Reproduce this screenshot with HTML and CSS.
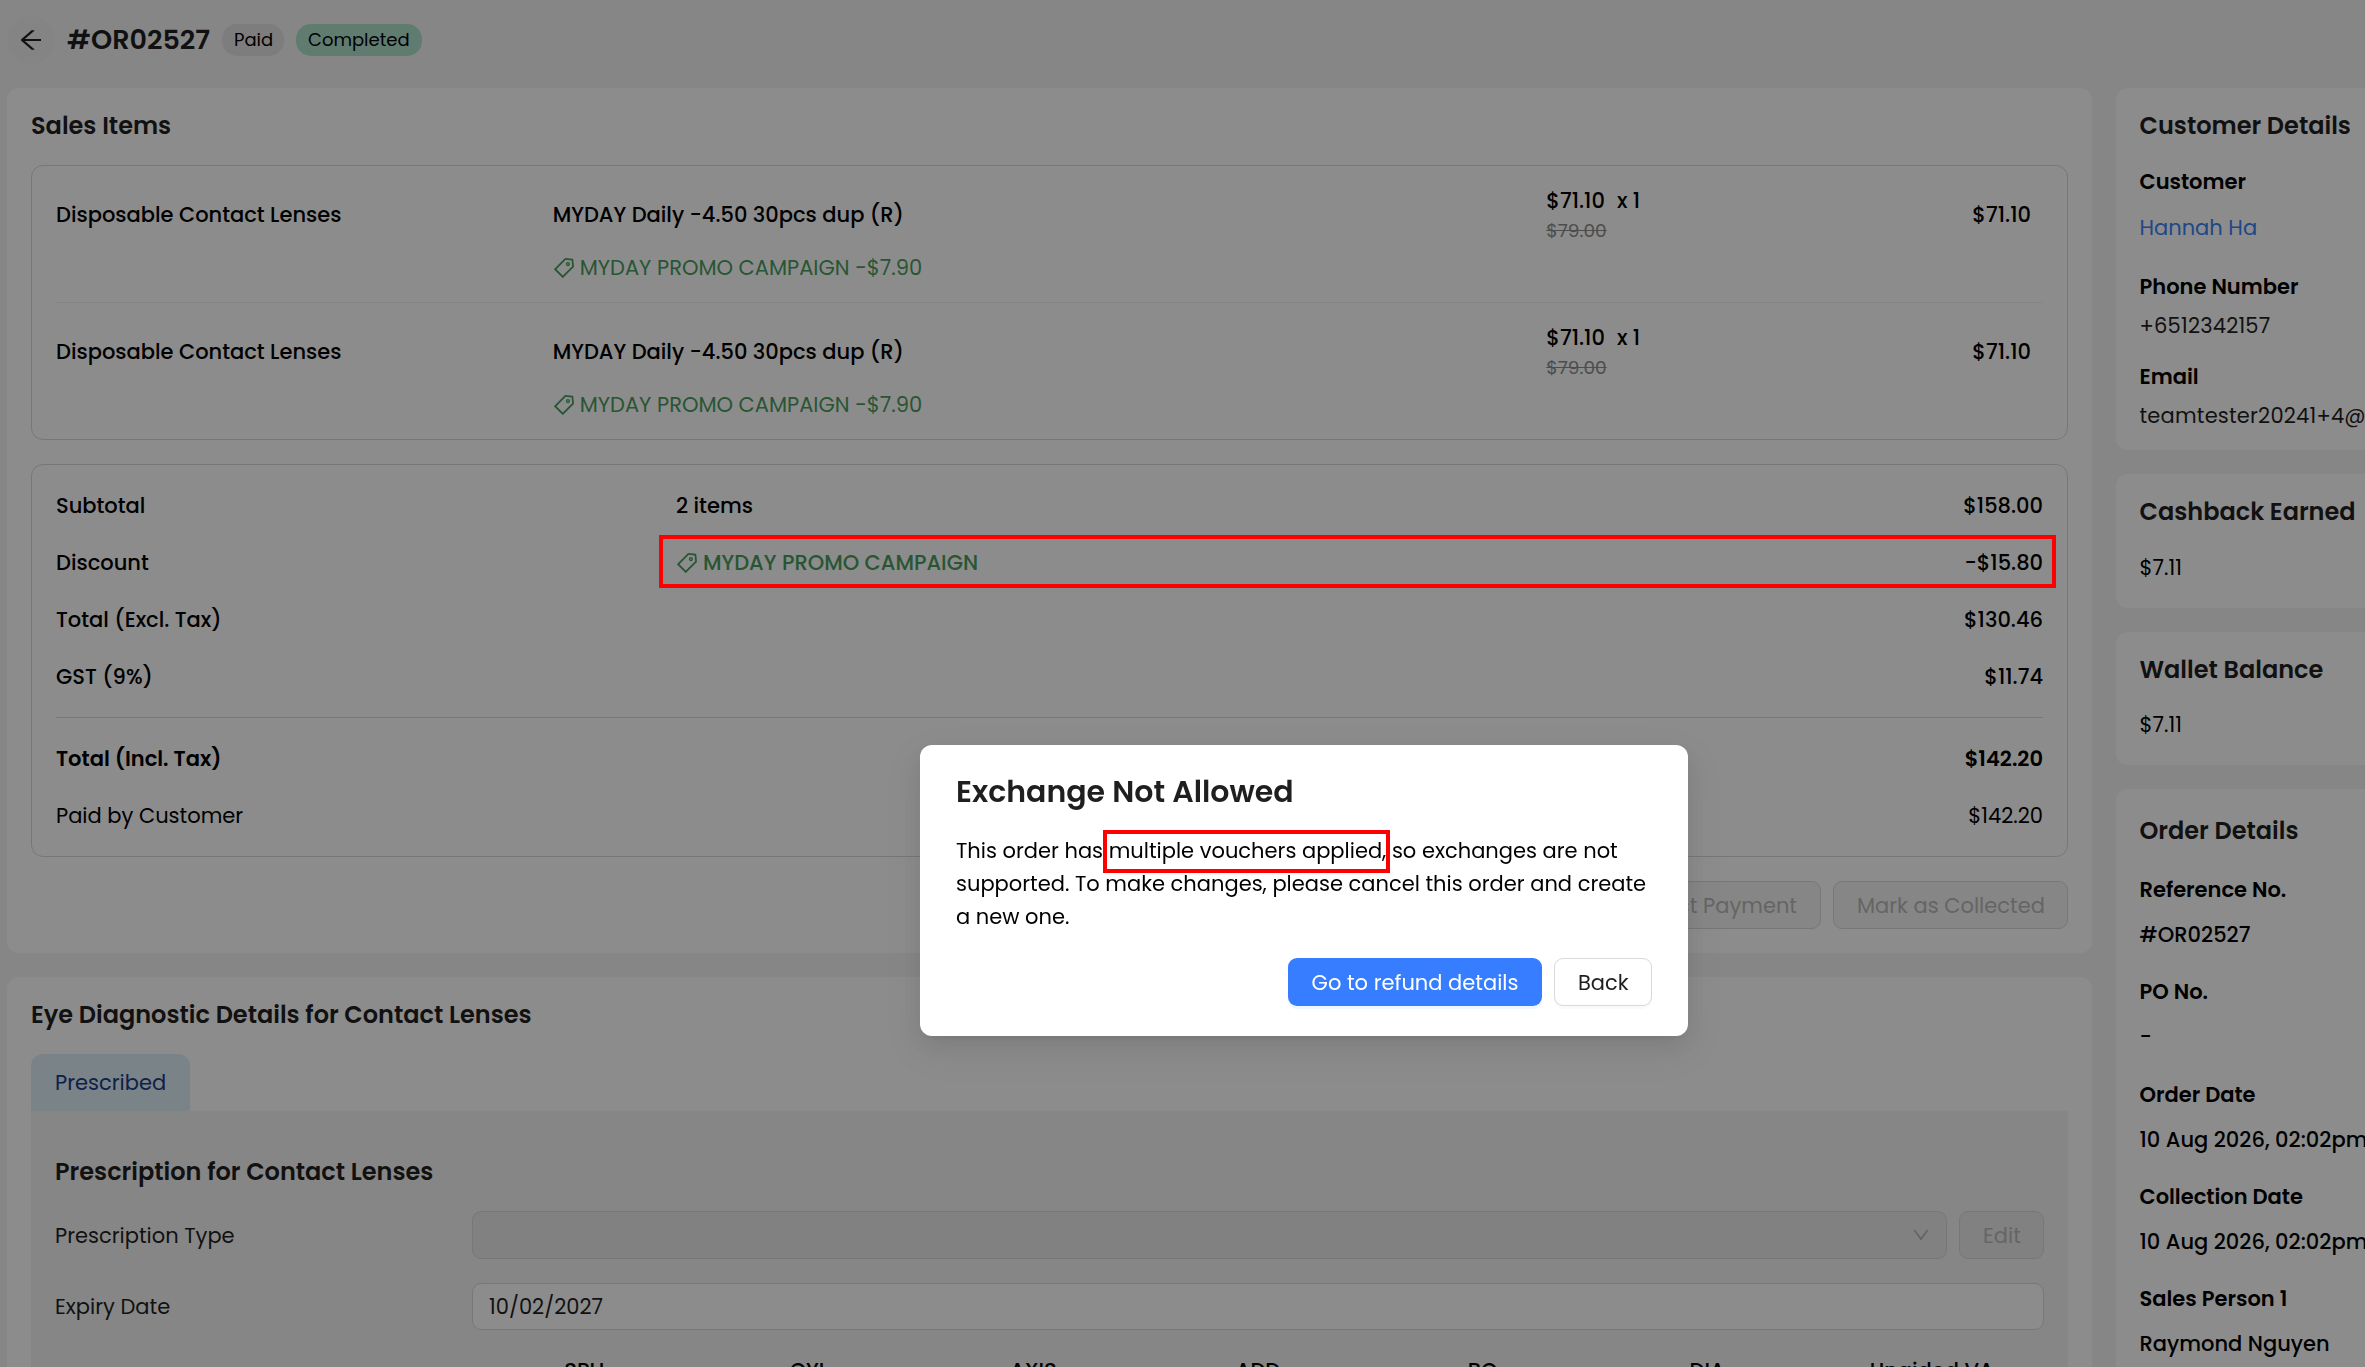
FILE: index.html
```html
<!DOCTYPE html>
<html lang="en">
<head>
    <meta charset="UTF-8">
    <meta name="viewport" content="width=device-width, initial-scale=1.0">
    <title>Order #OR02527</title>
    <link rel="stylesheet" href="styles.css">
</head>
<body>
    <svg class="sprite">
        <symbol id="icon-tag" viewBox="0 0 1024 1024">
            <path d="M938 458.8l-29.6-312.6c-1.5-16.2-14.4-29-30.6-30.6L565.2 86h-.4c-3.2 0-5.7 1-7.6 2.9L88.9 557.2a9.96 9.96 0 000 14.1l363.8 363.8c1.9 1.9 4.4 2.9 7.1 2.9s5.2-1 7.1-2.9l468.3-468.3c2-2.1 3-5 2.8-8zM459.7 834.7L189.3 564.3 589 164.6 836 188l23.4 247-399.7 399.7zM680 256c-48.5 0-88 39.5-88 88s39.5 88 88 88 88-39.5 88-88-39.5-88-88-88zm0 120c-17.7 0-32-14.3-32-32s14.3-32 32-32 32 14.3 32 32-14.3 32-32 32z"/>
        </symbol>
    </svg>

    <header class="page-header">
        <button class="back-btn">
            <svg viewBox="0 0 1024 1024"><path d="M872 474H286.9l350.2-304c5.6-4.9 2.2-14-5.2-14h-88.5c-3.9 0-7.6 1.4-10.5 3.9L155 487.8a31.96 31.96 0 000 48.3L535.1 866c1.5 1.3 3.3 2 5.2 2h91.5c7.4 0 10.8-9.2 5.2-14L286.9 550H872c4.4 0 8-3.6 8-8v-60c0-4.4-3.6-8-8-8z"/></svg>
        </button>
        <h1>#OR02527</h1>
        <span class="badge badge-paid">Paid</span>
        <span class="badge badge-completed">Completed</span>
    </header>

    <div class="page">
        <main class="main-column">
            <section class="card">
                <h2>Sales Items</h2>
                <div class="items-box">
                    <div class="item-row">
                        <div class="item-type">Disposable Contact Lenses</div>
                        <div class="item-product">
                            <div class="item-name">MYDAY Daily -4.50 30pcs dup (R)</div>
                            <div class="promo"><svg><use href="#icon-tag"/></svg><span class="promo-line">MYDAY PROMO CAMPAIGN -$7.90</span></div>
                        </div>
                        <div class="item-price">
                            <div><span>$71.10</span><span class="qty">x 1</span></div>
                            <del>$79.00</del>
                        </div>
                        <div class="item-total">$71.10</div>
                    </div>
                    <div class="item-row">
                        <div class="item-type">Disposable Contact Lenses</div>
                        <div class="item-product">
                            <div class="item-name">MYDAY Daily -4.50 30pcs dup (R)</div>
                            <div class="promo"><svg><use href="#icon-tag"/></svg><span class="promo-line">MYDAY PROMO CAMPAIGN -$7.90</span></div>
                        </div>
                        <div class="item-price">
                            <div><span>$71.10</span><span class="qty">x 1</span></div>
                            <del>$79.00</del>
                        </div>
                        <div class="item-total">$71.10</div>
                    </div>
                </div>

                <div class="summary-box">
                    <div class="summary-row"><span>Subtotal</span><span>2 items</span><span class="amount">$158.00</span></div>
                    <div class="summary-row">
                        <span>Discount</span>
                        <span class="promo"><svg><use href="#icon-tag"/></svg><span class="promo-name">MYDAY PROMO CAMPAIGN</span></span>
                        <span class="amount">-$15.80</span>
                    </div>
                    <div class="summary-row"><span>Total (Excl. Tax)</span><span></span><span class="amount">$130.46</span></div>
                    <div class="summary-row"><span>GST (9%)</span><span></span><span class="amount">$11.74</span></div>
                    <div class="summary-divider"></div>
                    <div class="summary-row total"><span>Total (Incl. Tax)</span><span></span><span class="amount">$142.20</span></div>
                    <div class="summary-row paid"><span>Paid by Customer</span><span></span><span class="amount">$142.20</span></div>
                </div>

                <div class="card-actions">
                    <button class="btn btn-disabled">Collect Payment</button>
                    <button class="btn btn-disabled btn-collected">Mark as Collected</button>
                </div>
            </section>

            <section class="card card-eye">
                <h2>Eye Diagnostic Details for Contact Lenses</h2>
                <div class="tab">Prescribed</div>
                <div class="tab-panel">
                    <h3>Prescription for Contact Lenses</h3>
                    <div class="form-row">
                        <label>Prescription Type</label>
                        <div class="select">
                            <svg viewBox="0 0 1024 1024"><path d="M884 256h-75c-5.1 0-9.9 2.5-12.9 6.6L512 654.2 227.9 262.6c-3-4.1-7.8-6.6-12.9-6.6h-75c-6.5 0-10.3 7.4-6.5 12.7l352.6 486.1c12.8 17.6 39 17.6 51.7 0l352.6-486.1c3.9-5.3.1-12.7-6.4-12.7z"/></svg>
                        </div>
                        <button class="btn btn-disabled btn-edit">Edit</button>
                    </div>
                    <div class="form-row">
                        <label>Expiry Date</label>
                        <div class="input">10/02/2027</div>
                    </div>
                    <div class="rx-head">
                        <span>SPH</span>
                        <span>CYL</span>
                        <span>AXIS</span>
                        <span>ADD</span>
                        <span>BC</span>
                        <span>DIA</span>
                        <span>Unaided VA</span>
                    </div>
                </div>
            </section>
        </main>

        <aside class="side-column">
            <section class="card customer">
                <h2>Customer Details</h2>
                <dl>
                    <dt>Customer</dt>
                    <dd class="link">Hannah Ha</dd>
                    <dt>Phone Number</dt>
                    <dd class="contact">+6512342157</dd>
                    <dt>Email</dt>
                    <dd class="contact">teamtester20241+4@</dd>
                </dl>
            </section>
            <section class="card balance">
                <h2>Cashback Earned</h2>
                <p>$7.11</p>
            </section>
            <section class="card balance">
                <h2>Wallet Balance</h2>
                <p>$7.11</p>
            </section>
            <section class="card order">
                <h2>Order Details</h2>
                <dl>
                    <dt>Reference No.</dt>
                    <dd>#OR02527</dd>
                    <dt>PO No.</dt>
                    <dd>-</dd>
                    <dt>Order Date</dt>
                    <dd>10 Aug 2026, 02:02pm</dd>
                    <dt>Collection Date</dt>
                    <dd>10 Aug 2026, 02:02pm</dd>
                    <dt>Sales Person 1</dt>
                    <dd>Raymond Nguyen</dd>
                </dl>
            </section>
        </aside>
    </div>

    <div class="mask"></div>
    <div class="highlight highlight-discount"></div>

    <div class="modal">
        <h2>Exchange Not Allowed</h2>
        <p>This order has <span class="marked">multiple vouchers applied,</span> so exchanges are not<br>supported. To make changes, please cancel this order and create<br>a new one.</p>
        <div class="modal-actions">
            <button class="btn btn-primary">Go to refund details</button>
            <button class="btn btn-back">Back</button>
        </div>
    </div>
</body>
</html>
```
FILE: styles.css
```css
*, *::after {
    box-sizing: border-box;
}

body {
    margin: 0;
    height: 1367px;
    overflow: hidden;
    background: #f5f5f5;
    color: #000;
    font-family: Poppins, Inter, sans-serif;
    font-size: 21px;
    line-height: 33px;
    white-space: nowrap;
}

h1, h2, h3, p, dl, dd {
    margin: 0;
}

h1, h2, h3 {
    color: #1f1f1f;
    font-weight: 600;
}

h2, h3 {
    font-size: 24px;
    line-height: 28px;
}

.sprite {
    display: none;
}

/* header */
.page-header {
    display: flex;
    align-items: center;
    height: 88px;
    padding: 0 7px 8px;
}

.back-btn {
    display: flex;
    align-items: center;
    justify-content: center;
    width: 48px;
    height: 48px;
    padding: 0;
    border: none;
    border-radius: 50%;
    background: #f1f1f1;
}

.back-btn svg {
    width: 28px;
    height: 28px;
    fill: #1f1f1f;
}

.page-header h1 {
    width: 155px;
    margin-left: 12px;
    font-size: 27px;
    line-height: 36px;
}

.badge {
    height: 32px;
    padding: 0 12px;
    border-radius: 15px;
    font-size: 18px;
    line-height: 32px;
}

.badge-paid {
    width: 62px;
    margin-right: 12px;
    background: #e3e3e3;
}

.badge-completed {
    background: #b0e1cd;
}

/* columns */
.page {
    display: flex;
    align-items: flex-start;
    gap: 24px;
    height: 1279px;
    padding-left: 7px;
    overflow: hidden;
}

.main-column {
    display: flex;
    flex-direction: column;
    flex: none;
    gap: 24px;
    width: 2085px;
}

.side-column {
    display: flex;
    flex-direction: column;
    flex: none;
    gap: 24px;
    width: 420px;
}

.card {
    padding: 24px;
    border-radius: 12px;
    background: #fff;
}

.main-column h2 {
    margin-bottom: 25px;
}

/* sales items */
.items-box, .summary-box {
    margin-bottom: 24px;
    border: 1px solid #d9d9d9;
    border-radius: 12px;
    font-weight: 500;
}

.items-box {
    padding: 0 24px;
}

.item-row {
    display: grid;
    grid-template-columns: 2fr 4fr 1fr 1fr;
    height: 136px;
}

.item-row + .item-row {
    height: 137px;
    border-top: 1px solid #f0f0f0;
}

.item-type, .item-product, .item-total {
    padding-top: 32px;
}

.item-price {
    padding-top: 18px;
}

.item-total {
    padding-right: 12px;
    text-align: right;
}

.qty {
    margin-left: 12px;
}

.item-price del {
    display: block;
    color: #8c8c8c;
    font-size: 18.5px;
    font-weight: 400;
    line-height: 27px;
}

.promo {
    display: flex;
    align-items: center;
    gap: 4px;
    color: #4a9d60;
}

.promo svg {
    width: 24px;
    height: 24px;
    margin-left: -1px;
    fill: currentColor;
}

.item-product .promo {
    margin-top: 20px;
    font-weight: 400;
}

.summary-box {
    padding: 12px 24px;
}

.summary-row {
    display: grid;
    grid-template-columns: 620px 1fr auto;
    align-items: center;
    height: 57px;
}

.summary-divider {
    height: 1px;
    margin: 12px 0;
    background: #d9d9d9;
}

.total {
    font-weight: 600;
}

.paid {
    font-weight: 400;
}

.card-actions {
    display: flex;
    justify-content: flex-end;
    gap: 12px;
}

.btn {
    height: 48px;
    padding: 0 23px;
    border: 1px solid #d9d9d9;
    border-radius: 9px;
    background: #fff;
    color: #1f1f1f;
    font: inherit;
}

.btn-disabled {
    background: #f5f5f5;
    color: #b8b8b8;
}

.btn-collected {
    width: 235px;
}

/* eye diagnostic */
.card-eye {
    padding-bottom: 0;
}

.tab {
    width: 159px;
    height: 57px;
    padding-left: 24px;
    border-radius: 12px 12px 0 0;
    background: #dceff7;
    color: #1b3c85;
    line-height: 57px;
}

.tab-panel {
    height: 400px;
    padding: 47px 24px 0;
    background: #f5f5f5;
    color: #1f1f1f;
}

.tab-panel h3 {
    margin-bottom: 25px;
}

.form-row {
    display: flex;
    align-items: center;
    gap: 12px;
    margin-bottom: 24px;
}

.form-row label {
    width: 405px;
}

.select {
    display: flex;
    align-items: center;
    justify-content: flex-end;
    flex: 1;
    height: 48px;
    padding-right: 15px;
    border: 1px solid #d9d9d9;
    border-radius: 9px;
    background: #ebebeb;
}

.select svg {
    width: 20px;
    height: 20px;
    fill: #b0b0b0;
}

.btn-edit {
    width: 85px;
    background: #ebebeb;
}

.input {
    flex: 1;
    height: 47px;
    padding: 0 16px;
    border: 1px solid #d9d9d9;
    border-radius: 9px;
    background: #fff;
    line-height: 45px;
}

.rx-head {
    display: grid;
    grid-template-columns: repeat(7, 1fr);
    margin-left: 417px;
    color: #000;
    font-weight: 500;
    text-align: center;
}

/* side cards */
dt {
    font-weight: 600;
}

.side-column .card {
    padding-left: 23.5px;
}

.customer {
    height: 362px;
}

.customer dt {
    margin-top: 18px;
}

.customer dt:first-child {
    margin-top: 25px;
}

.customer dd {
    margin-top: 6px;
    color: #1f1f1f;
}

.customer .contact {
    letter-spacing: 0.2px;
}

.customer .link {
    margin: 13px 0 26px;
    color: #3b82f6;
}

.balance {
    height: 134px;
}

.balance + .balance {
    height: 133px;
}

.balance p {
    margin-top: 25px;
}

.balance + .balance p {
    margin-top: 24px;
}

.order {
    height: 700px;
    padding-top: 28px;
}

.order dl {
    margin-top: 28px;
    font-weight: 500;
}

.order dd {
    margin: 12px 0 24.25px;
}

/* modal */
.mask {
    position: fixed;
    inset: 0;
    background: rgba(0, 0, 0, 0.45);
}

.highlight {
    position: absolute;
    border: 4px solid #f00;
}

.highlight-discount {
    left: 659px;
    top: 535px;
    width: 1397px;
    height: 53px;
}

.modal {
    position: fixed;
    left: 920px;
    top: 745px;
    width: 768px;
    height: 291px;
    padding: 29px 36px;
    border-radius: 12px;
    background: #fff;
    box-shadow: 0 9px 24px rgba(0, 0, 0, 0.08), 0 5px 9px -6px rgba(0, 0, 0, 0.12), 0 14px 42px 12px rgba(0, 0, 0, 0.05);
}

.modal h2 {
    margin-bottom: 24px;
    font-size: 30px;
    line-height: 36px;
}

.marked {
    position: relative;
}

.marked::after {
    content: "";
    position: absolute;
    left: -6px;
    right: -4px;
    top: -6px;
    height: 43px;
    border: 4px solid #f00;
}

.modal-actions {
    display: flex;
    justify-content: flex-end;
    gap: 12px;
    margin-top: 25px;
}

.btn-primary {
    width: 254px;
    border: none;
    background: #377dff;
    color: #fff;
    box-shadow: 0 3px 0 rgba(5, 95, 255, 0.06);
}

.btn-back {
    width: 98px;
    box-shadow: 0 3px 0 rgba(0, 0, 0, 0.02);
}
```
